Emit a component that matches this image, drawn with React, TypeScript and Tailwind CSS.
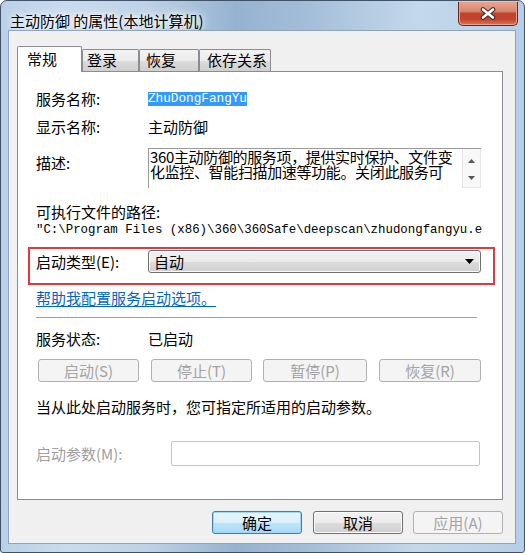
import React from 'react';

const cjk = '[font-family:"Noto_Sans_CJK_SC","Noto_Sans",sans-serif]';

// Win7 style push button
const Btn: React.FC<{ label: string; w: string; kind?: 'default' | 'normal' | 'disabled' }> = ({ label, w, kind = 'normal' }) => {
  const look =
    kind === 'default'
      ? 'border-[#3c7fb1] bg-[linear-gradient(180deg,#eaf6fd_0%,#d9f0fc_50%,#bee6fd_51%,#a7d9f5_100%)] text-black shadow-[inset_0_0_0_1px_#9fd6f6]'
      : kind === 'normal'
      ? 'border-[#707070] bg-[linear-gradient(180deg,#f2f2f2_0%,#ebebeb_50%,#dddddd_51%,#cfcfcf_100%)] text-black shadow-[inset_0_0_0_1px_#fcfcfc]'
      : 'border-[#adb2b5] bg-[#f4f4f4] text-[#a3a3a3]';
  return (
    <div className={`${w} h-[23px] flex items-center justify-center rounded-[3px] border text-[15px] leading-none ${look}`}>
      {label}
    </div>
  );
};

const Tab: React.FC<{ label: string; w: string; pl: string; active?: boolean }> = ({ label, w, pl, active }) =>
  active ? (
    <div className={`${w} ${pl} h-[26px] pt-[3px] border-x border-t border-[#898c95] bg-white text-[15px] leading-[18px] rounded-t-[2px]`}>
      {label}
    </div>
  ) : (
    <div
      className={`${w} ${pl} h-[22px] mb-[1px] pt-[1px] border border-b-0 border-[#898c95] bg-[linear-gradient(180deg,#f3f3f3_0%,#ebebeb_50%,#dddddd_51%,#cfcfcf_100%)] text-[15px] leading-[18px] rounded-t-[2px]`}
    >
      {label}
    </div>
  );

const Arrow: React.FC<{ up?: boolean; color?: string; w?: number }> = ({ up, color = '#000', w = 9 }) => (
  <svg width={w} height={Math.ceil(w / 2)} viewBox={`0 0 ${w} ${Math.ceil(w / 2)}`}>
    {up ? (
      <polygon points={`0,${Math.ceil(w / 2)} ${w},${Math.ceil(w / 2)} ${w / 2},0`} fill={color} />
    ) : (
      <polygon points={`0,0 ${w},0 ${w / 2},${Math.ceil(w / 2)}`} fill={color} />
    )}
  </svg>
);

export default function App() {
  return (
    <div className={`w-[525px] h-[553px] bg-white overflow-hidden ${cjk}`}>
      <div className="w-full h-full flex flex-col rounded-t-[7px] rounded-b-[3px] border border-[#3f5266] bg-[linear-gradient(90deg,#b9d1e8_0%,#c9dbee_12%,#bed2e7_28%,#95b3d1_45%,#a3bdd8_58%,#c4d8ec_80%,#b5cfe7_100%)]">
        {/* title bar */}
        <div className="h-[29px] flex justify-between shrink-0">
          <div className="pl-[9px] pt-[11px] text-[15px] leading-[18px] text-black [text-shadow:0_0_8px_#ffffff,0_0_4px_#ffffff,0_0_12px_#e8f2fc]">
            主动防御 的属性(本地计算机)
          </div>
          <div className="mr-[6px] mt-[1px] w-[60px] h-[24px] rounded-b-[5px] border border-t-0 border-[#6b2418] bg-[linear-gradient(180deg,#e6a593_0%,#d98770_40%,#c2432b_50%,#c0452d_75%,#dd7559_100%)] shadow-[inset_0_0_0_1px_#eba08b] flex items-center justify-center">
            <svg width="18" height="13" viewBox="0 0 18 13">
              <path d="M4 2.5 L14 10.5 M14 2.5 L4 10.5" stroke="#3b2a27" strokeWidth="4.6" strokeLinecap="round" />
              <path d="M4 2.5 L14 10.5 M14 2.5 L4 10.5" stroke="#ffffff" strokeWidth="2.6" strokeLinecap="round" />
            </svg>
          </div>
        </div>

        {/* client area */}
        <div className="flex-1 ml-[7px] mr-[8px] mb-[8px] border border-[#8fa4ba] bg-[#f0f0f0] pl-[8px] pt-[15px] flex flex-col">
          <div className="flex items-end h-[26px] -mb-[1px] relative z-10">
            <Tab label="常规" w="w-[65px]" pl="pl-[9px]" active />
            <Tab label="登录" w="w-[57px]" pl="pl-[4px]" />
            <Tab label="恢复" w="w-[60px]" pl="pl-[6px]" />
            <Tab label="依存关系" w="w-[72px]" pl="pl-[7px]" />
          </div>

          {/* tab page */}
          <div className="w-[486px] h-[429px] border border-[#898c95] bg-white pl-[18px] flex flex-col text-[15px] leading-[18px] text-black">
            <div className="mt-[18px] h-[18px] flex items-center">
              <div className="w-[112px]">服务名称:</div>
              <div className="h-[14px] bg-[#3399ff] text-white [font-family:'Liberation_Mono',monospace] text-[12.7px] leading-[14px]">
                ZhuDongFangYu
              </div>
            </div>

            <div className="mt-[10px] h-[18px] flex items-center">
              <div className="w-[112px]">显示名称:</div>
              <div>主动防御</div>
            </div>

            <div className="mt-[12px] h-[40px] flex">
              <div className="w-[112px] mt-[6px]">描述:</div>
              <div className="w-[333px] h-[40px] flex border-t border-l border-[#9a9a9a]">
                <div className="flex-1 pl-[1px] leading-[15px] tracking-[-0.35px] whitespace-nowrap">
                  <div>360主动防御的服务项，提供实时保护、文件变</div>
                  <div>化监控、智能扫描加速等功能。关闭此服务可</div>
                </div>
                <div className="w-[19px] h-full bg-[#f8f8f8] border border-t-0 border-[#e6e6e6] flex flex-col items-center pt-[10px] gap-[13px]">
                  <Arrow up color="#555" w={7} />
                  <Arrow color="#555" w={7} />
                </div>
              </div>
            </div>

            <div className="mt-[15px] h-[18px]">可执行文件的路径:</div>
            <div className="h-[18px] w-[447px] overflow-hidden whitespace-nowrap [font-family:'Liberation_Mono',monospace] text-[12.4px] leading-[18px]">
              "C:\Program Files (x86)\360\360Safe\deepscan\zhudongfangyu.exe"
            </div>

            <div className="mt-[8px] -ml-[8px] w-[467px] h-[38px] border-2 border-[#ef3338] pl-[6px] pt-[1px] flex items-start">
              <div className="w-[112px] h-[23px] flex items-center">启动类型(E):</div>
              <div className="w-[333px] h-[23px] rounded-[3px] border border-[#707070] bg-[linear-gradient(180deg,#f2f2f2_0%,#ebebeb_50%,#dddddd_51%,#cfcfcf_100%)] shadow-[inset_0_0_0_1px_#fafafa] flex items-center justify-between pl-[5px] pr-[6px]">
                <span>自动</span>
                <Arrow w={9} />
              </div>
            </div>

            <div className="mt-[4px] h-[18px]">
              <span className="text-[#0066cc] underline underline-offset-2">帮助我配置服务启动选项。</span>
            </div>

            <div className="mt-[10px] w-[441px] h-[2px] border-t border-b border-t-[#a0a0a0] border-b-white" />

            <div className="mt-[11px] h-[18px] flex items-center">
              <div className="w-[112px]">服务状态:</div>
              <div>已启动</div>
            </div>

            <div className="mt-[11px] ml-[2px] flex">
              <Btn label="启动(S)" w="w-[101px]" kind="disabled" />
              <div className="w-[12px]" />
              <Btn label="停止(T)" w="w-[101px]" kind="disabled" />
              <div className="w-[11px]" />
              <Btn label="暂停(P)" w="w-[104px]" kind="disabled" />
              <div className="w-[12px]" />
              <Btn label="恢复(R)" w="w-[102px]" kind="disabled" />
            </div>

            <div className="mt-[16px] h-[18px]">当从此处启动服务时，您可指定所适用的启动参数。</div>

            <div className="mt-[25px] h-[25px] flex items-center">
              <div className="w-[135px] text-[#a0a0a0]">启动参数(M):</div>
              <div className="w-[309px] h-[25px] rounded-[2px] border border-[#c3c5c8] bg-white" />
            </div>
          </div>

          <div className="mt-[11px] w-[486px] flex justify-end">
            <Btn label="确定" w="w-[90px]" kind="default" />
            <div className="w-[11px]" />
            <Btn label="取消" w="w-[90px]" />
            <div className="w-[10px]" />
            <Btn label="应用(A)" w="w-[90px]" kind="disabled" />
          </div>
        </div>
      </div>
    </div>
  );
}
